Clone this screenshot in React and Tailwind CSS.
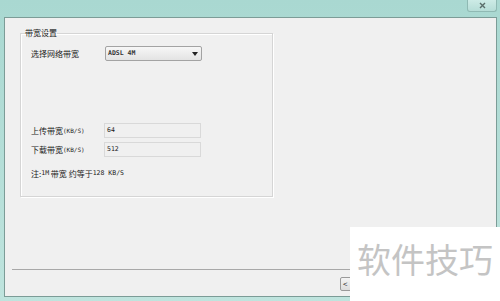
export default function App() {
  const font = { fontFamily: '"Noto Sans CJK SC", "Liberation Sans", sans-serif' };
  const mono = { fontFamily: '"DejaVu Sans Mono", "Liberation Mono", monospace' };
  return (
    <div
      className="relative w-[500px] h-[301px] overflow-hidden flex flex-col bg-gradient-to-b from-[#a9d8d1] to-[#bfe4de] text-[#1a1a1a]"
      style={font}
    >
      {/* title bar */}
      <div className="h-[17px] flex justify-end pr-[3px]">
        <div className="w-[30px] h-[12px] rounded-b-[3px] border border-t-0 border-[#8fb9b3] bg-gradient-to-b from-[#cdebe6] to-[#b6ddd7] flex items-center justify-center">
          <svg width="7" height="7" viewBox="0 0 7 7">
            <path d="M1 1 L6 6 M6 1 L1 6" stroke="#5a6d6a" strokeWidth="1.4" />
          </svg>
        </div>
      </div>
      {/* client */}
      <div className="flex-1 ml-[4px] mr-[3px] mb-[4px] border border-[#7c9c97] bg-[#f0f0f0] flex flex-col">
        <div className="flex-1 pl-[15px] pt-[9px]">
          <fieldset className="w-[253px] h-[170px] border border-[#d5d5d5] shadow-[inset_1px_1px_0_#ffffff,1px_1px_0_#ffffff] pl-[10px] pr-0 pb-0 m-0">
            <legend className="text-[8px] leading-[12px] px-0 ml-[-6px]">带宽设置</legend>
            <div className="flex items-center mt-[7px] h-[15px]">
              <span className="w-[74px] text-[8px]">选择网络带宽</span>
              <div className="w-[97px] h-[15px] rounded-[2px] border border-[#a3a3a3] bg-gradient-to-b from-[#f7f7f7] to-[#e3e3e3] flex items-center justify-between pl-[2px] pr-[3px]">
                <span className="text-[6.5px] font-bold text-[#333]" style={mono}>ADSL 4M</span>
                <svg width="6" height="4" viewBox="0 0 6 4">
                  <path d="M0 0 H6 L3 4 Z" fill="#222" />
                </svg>
              </div>
            </div>
            <div className="flex flex-col gap-[4px] mt-[62px]">
              <div className="flex items-center h-[15px]">
                <span className="w-[73px] text-[8px] flex items-center">
                  上传带宽<span className="text-[6px]" style={mono}>(KB/S)</span>
                </span>
                <div className="w-[97px] h-[15px] border border-[#d9d9d9] bg-[#f0f0f0] text-[6.5px] flex items-center pl-[2px]" style={mono}>64</div>
              </div>
              <div className="flex items-center h-[15px]">
                <span className="w-[73px] text-[8px] flex items-center">
                  下载带宽<span className="text-[6px]" style={mono}>(KB/S)</span>
                </span>
                <div className="w-[97px] h-[15px] border border-[#d9d9d9] bg-[#f0f0f0] text-[6.5px] flex items-center pl-[2px]" style={mono}>512</div>
              </div>
            </div>
            <div className="mt-[11px] text-[8px] flex items-center whitespace-nowrap">
              注:<span className="text-[6.5px]" style={mono}>1M</span>&nbsp;带宽 约等于<span className="text-[6.5px]" style={mono}>128 KB/S</span>
            </div>
          </fieldset>
        </div>
        <div className="h-[27px] ml-[7px] border-t border-[#a8a8a8] flex items-start pl-[328px] pt-[7px]">
          <div className="w-[14px] h-[14px] rounded-[2px] border border-[#9a9a9a] bg-gradient-to-b from-[#f4f4f4] to-[#dcdcdc] text-[8px] leading-[12px] pl-[2px]">&lt;</div>
        </div>
      </div>
      {/* watermark overlay */}
      <div className="absolute left-[350px] top-[227px] w-[150px] h-[74px] bg-white flex items-start justify-center pt-[15px]">
        <span className="text-[34px] text-[#c4c4c4] leading-none whitespace-nowrap" style={font}>软件技巧</span>
      </div>
    </div>
  );
}
